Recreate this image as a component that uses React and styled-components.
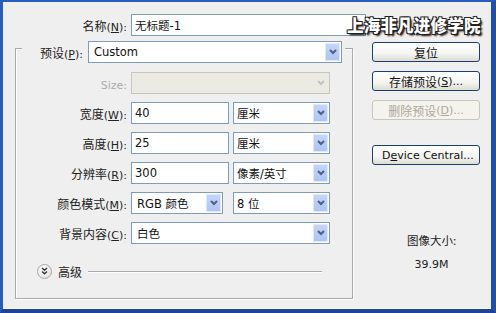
import React from "react";
import styled, { createGlobalStyle } from "styled-components";

const GlobalStyle = createGlobalStyle`
  body {
    margin: 0;
    background: #efefef;
    font-family: "DejaVu Sans", "Noto Sans CJK SC", sans-serif;
  }
`;

const Window = styled.div`
  position: relative;
  width: 496px;
  height: 313px;
  box-sizing: border-box;
  display: flex;
  background: #efefef;
  border-left: 3px solid #2a5cc0;
  border-top: 2px solid #2a5cc0;
  border-right: 5px solid #1f4fae;
  border-bottom: 4px solid #1a4596;
  box-shadow: inset 0 -1px 0 #f8f8f8;
`;

const Main = styled.div`
  width: 363px;
  padding-top: 12px;
  display: flex;
  flex-direction: column;
`;

const Side = styled.div`
  flex: 1;
  display: flex;
  flex-direction: column;
  align-items: flex-start;
  padding: 40px 0 0 6px;
`;

const Row = styled.div`
  display: flex;
  align-items: center;
  gap: 4px;
  height: 22px;
`;

const Label = styled.div`
  width: ${({ $w }) => $w}px;
  text-align: right;
  font-family: "Noto Sans CJK SC", sans-serif;
  font-size: 12px;
  color: ${({ $disabled }) => ($disabled ? "#acacac" : "#222")};
  white-space: nowrap;
  flex-shrink: 0;
`;

const Latin = styled.span`
  font-family: "DejaVu Sans", sans-serif;
  font-size: 11px;
`;

const TextBox = styled.div`
  width: ${({ $w }) => $w}px;
  height: 22px;
  box-sizing: border-box;
  border: 1px solid #7f9db9;
  background: #fff;
  padding-left: 3px;
  display: flex;
  align-items: center;
  font-family: "DejaVu Sans", "Noto Sans CJK SC", sans-serif;
  font-size: 11.5px;
  color: #111;
`;

const SelectBox = styled.div`
  width: ${({ $w }) => $w}px;
  height: 22px;
  box-sizing: border-box;
  margin-left: ${({ $ml }) => $ml ?? 0}px;
  border: 1px solid ${({ $disabled }) => ($disabled ? "#c9c7ba" : "#7f9db9")};
  background: ${({ $disabled }) => ($disabled ? "#ebebe4" : "#fff")};
  display: flex;
  align-items: stretch;
  font-family: "DejaVu Sans", "Noto Sans CJK SC", sans-serif;
  font-size: 11.5px;
  color: #111;
`;

const SelectText = styled.div`
  flex: 1;
  display: flex;
  align-items: center;
  padding-left: ${({ $pad }) => $pad ?? 3}px;
  white-space: nowrap;
`;

const ArrowBtn = styled.div`
  width: 15px;
  margin: 1px;
  border-radius: 2px;
  display: flex;
  align-items: center;
  justify-content: center;
  background: ${({ $disabled }) =>
    $disabled ? "transparent" : "linear-gradient(#c6d6fb, #adc3f2)"};
  box-shadow: ${({ $disabled }) => ($disabled ? "none" : "inset 0 0 0 1px #dfe8fd")};
`;

const Chevron = ({ disabled }) => (
  <svg width="8" height="6" viewBox="0 0 8 6">
    <path
      d="M1 1 L4 4 L7 1"
      fill="none"
      stroke={disabled ? "#c3c3c3" : "#4d6185"}
      strokeWidth="2"
    />
  </svg>
);

const Select = ({ w, children, disabled, pad, ml }) => (
  <SelectBox $w={w} $disabled={disabled} $ml={ml}>
    <SelectText $pad={pad}>{children}</SelectText>
    <ArrowBtn $disabled={disabled}>
      <Chevron disabled={disabled} />
    </ArrowBtn>
  </SelectBox>
);

const GroupBox = styled.div`
  margin: 12px 0 0 12px;
  width: 338px;
  height: 251px;
  box-sizing: border-box;
  border: 1px solid #a9a9a9;
  box-shadow: inset 1px 1px 0 #fff, 1px 1px 0 #fff;
  display: flex;
  flex-direction: column;
`;

const Legend = styled.div`
  margin: -8px 0 0 6px;
  align-self: flex-start;
  display: flex;
  align-items: center;
  gap: 5px;
  padding: 0 3px 0 13px;
  background: #efefef;
`;

const Fields = styled.div`
  display: flex;
  flex-direction: column;
  gap: 8px;
  margin-top: 9px;
`;

const Advanced = styled.div`
  display: flex;
  align-items: center;
  margin: 19px 0 0 21px;
  height: 16px;
  font-family: "Noto Sans CJK SC", sans-serif;
  font-size: 12px;
  color: #222;
`;

const Toggle = styled.div`
  width: 13px;
  height: 13px;
  border-radius: 50%;
  border: 1px solid #a6a6a6;
  background: radial-gradient(circle at 40% 35%, #ffffff, #dcdcdc);
  display: flex;
  align-items: center;
  justify-content: center;
  margin-right: 6px;
`;

const Rule = styled.div`
  width: 234px;
  height: 1px;
  background: #a9a9a9;
  box-shadow: 0 1px 0 #fff;
  margin-left: 6px;
`;

const Button = styled.div`
  width: 108px;
  height: 20px;
  box-sizing: border-box;
  border: 1px solid ${({ $disabled }) => ($disabled ? "#c9c7ba" : "#1c3f6e")};
  border-radius: 3px;
  background: ${({ $disabled }) =>
    $disabled ? "#f4f3ee" : "linear-gradient(#ffffff 0%, #f4f4f0 60%, #dcdcd4 100%)"};
  display: flex;
  align-items: center;
  justify-content: ${({ $left }) => ($left ? "flex-start" : "center")};
  padding-left: ${({ $left }) => ($left ? "9px" : "0")};
  font-family: "Noto Sans CJK SC", sans-serif;
  font-size: 12px;
  color: ${({ $disabled }) => ($disabled ? "#aca899" : "#111")};
  margin-top: ${({ $mt }) => $mt ?? 9}px;
  &:first-child {
    margin-top: 0;
  }
`;

const SizeInfo = styled.div`
  align-self: stretch;
  margin-top: 67px;
  display: flex;
  flex-direction: column;
  align-items: center;
  gap: 10px;
  font-family: "Noto Sans CJK SC", sans-serif;
  font-size: 11.5px;
  color: #222;
`;

const Watermark = styled.div`
  position: absolute;
  left: 344px;
  top: 11px;
  font-family: "Noto Sans CJK SC", sans-serif;
  font-weight: 900;
  font-size: 16.5px;
  color: #fff;
  letter-spacing: 0.2px;
  text-shadow: 1px 1px 0 #222, -1px -1px 0 #222, 1px -1px 0 #222, -1px 1px 0 #222,
    2px 2px 2px #000;
`;

const Mn = ({ children, end = ":" }) => (
  <Latin>
    (<u>{children}</u>){end}
  </Latin>
);

export default function App() {
  return (
    <>
      <GlobalStyle />
      <Window>
        <Main>
          <Row>
            <Label $w={124}>
              名称<Mn>N</Mn>
            </Label>
            <TextBox $w={235}>无标题-1</TextBox>
          </Row>
          <GroupBox>
            <Legend>
              <Label $w={48}>
                预设<Mn>P</Mn>
              </Label>
              <Select w={254} pad={5}>
                Custom
              </Select>
            </Legend>
            <Fields>
              <Row>
                <Label $w={111} $disabled>
                  <Latin>Size:</Latin>
                </Label>
                <Select w={199} disabled />
              </Row>
              <Row>
                <Label $w={111}>
                  宽度<Mn>W</Mn>
                </Label>
                <TextBox $w={98}>40</TextBox>
                <Select w={97}>厘米</Select>
              </Row>
              <Row>
                <Label $w={111}>
                  高度<Mn>H</Mn>
                </Label>
                <TextBox $w={98}>25</TextBox>
                <Select w={97}>厘米</Select>
              </Row>
              <Row>
                <Label $w={111}>
                  分辨率<Mn>R</Mn>
                </Label>
                <TextBox $w={98}>300</TextBox>
                <Select w={97}>像素/英寸</Select>
              </Row>
              <Row>
                <Label $w={111}>
                  颜色模式<Mn>M</Mn>
                </Label>
                <Select w={92} pad={5}>
                  RGB 颜色
                </Select>
                <Select w={97} ml={6}>
                  8 位
                </Select>
              </Row>
              <Row>
                <Label $w={111}>
                  背景内容<Mn>C</Mn>
                </Label>
                <Select w={199} pad={5}>
                  白色
                </Select>
              </Row>
            </Fields>
            <Advanced>
              <Toggle>
                <svg width="7" height="8" viewBox="0 0 7 8">
                  <path
                    d="M1 1 L3.5 3.3 L6 1 M1 4.5 L3.5 6.8 L6 4.5"
                    fill="none"
                    stroke="#333"
                    strokeWidth="1.4"
                  />
                </svg>
              </Toggle>
              高级
              <Rule />
            </Advanced>
          </GroupBox>
        </Main>
        <Side>
          <Button>复位</Button>
          <Button>
            存储预设<Mn end="...">S</Mn>
          </Button>
          <Button $disabled>
            删除预设<Mn end="...">D</Mn>
          </Button>
          <Button $mt={25} $left>
            <Latin>
              D<u>e</u>vice Central...
            </Latin>
          </Button>
          <SizeInfo>
            <span>图像大小:</span>
            <Latin>39.9M</Latin>
          </SizeInfo>
        </Side>
        <Watermark>上海非凡进修学院</Watermark>
      </Window>
    </>
  );
}
